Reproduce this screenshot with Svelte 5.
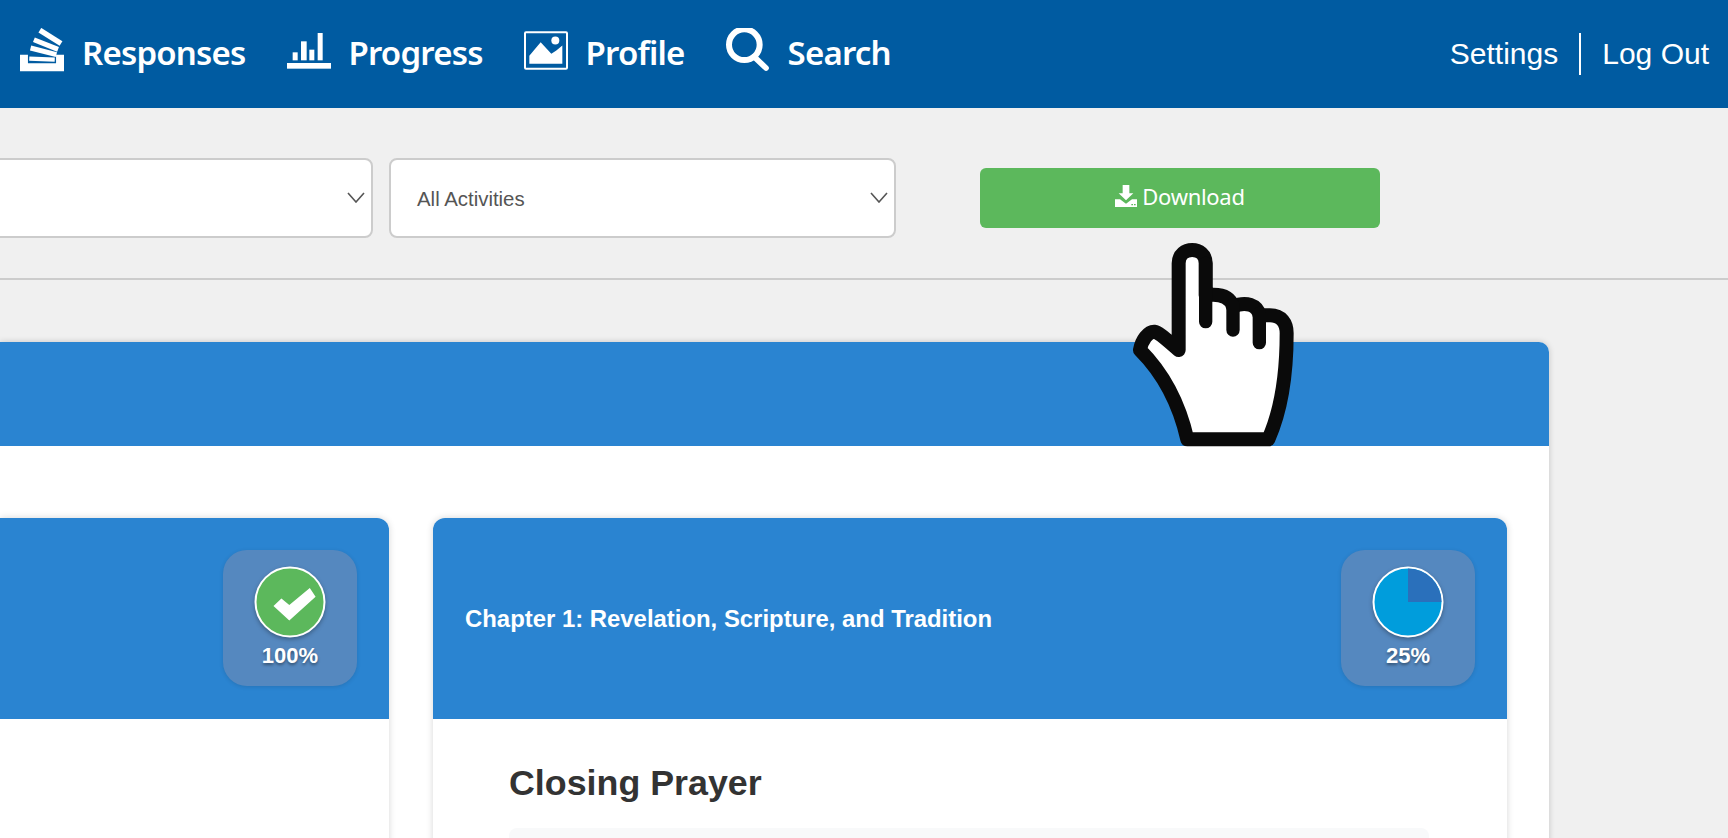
<script>
  const navItems = [
    { label: 'Responses', key: 'responses' },
    { label: 'Progress', key: 'progress' },
    { label: 'Profile', key: 'profile' },
    { label: 'Search', key: 'search' }
  ];
</script>

<div class="page">
  <header class="topbar">
    <nav class="main-nav">
      {#each navItems as item}
        <a class="nav-item {item.key}" href="#{item.key}">
          {#if item.key === 'responses'}
            <svg class="ico" viewBox="0 0 133 132" width="44" height="44" fill="none" stroke="#fff">
              <path d="M12 80V118H121V80" stroke-width="24" />
              <path d="M28 92L105 95" stroke-width="13" />
              <path d="M32 60L110 80" stroke-width="15" />
              <path d="M42 35L115 64" stroke-width="15" />
              <path d="M60 6L124 46" stroke-width="16" />
            </svg>
          {:else if item.key === 'progress'}
            <svg class="ico shifted" viewBox="0 0 132 108" width="44" height="36" fill="#fff">
              <rect x="0" y="90" width="132" height="17" />
              <rect x="17" y="58" width="15" height="24" />
              <rect x="42" y="25" width="17" height="57" />
              <rect x="67" y="50" width="15" height="32" />
              <rect x="92" y="0" width="15" height="82" />
            </svg>
          {:else if item.key === 'profile'}
            <svg class="ico" viewBox="0 0 132 116" width="44" height="39">
              <rect x="3" y="3" width="126" height="110" rx="3" fill="none" stroke="#fff" stroke-width="6" />
              <circle cx="94" cy="28" r="12" fill="#fff" />
              <path d="M16 98V74L50 33L82 68L97 58L115 43V98Z" fill="#fff" />
            </svg>
          {:else}
            <svg class="ico" viewBox="0 0 132 132" width="44" height="44" fill="none" stroke="#fff">
              <circle cx="55" cy="50" r="46" stroke-width="18" />
              <path d="M84 86L120 120" stroke-width="17" stroke-linecap="round" />
            </svg>
          {/if}
          <span>{item.label}</span>
        </a>
      {/each}
    </nav>
    <div class="account">
      <a href="#settings">Settings</a>
      <i class="sep"></i>
      <a href="#logout">Log Out</a>
    </div>
  </header>

  <section class="filters">
    <div class="select first">
      <svg class="chev" viewBox="0 0 18 11" width="18" height="11"><path d="M1 1L9 10L17 1" /></svg>
    </div>
    <div class="select second">
      <span>All Activities</span>
      <svg class="chev" viewBox="0 0 18 11" width="18" height="11"><path d="M1 1L9 10L17 1" /></svg>
    </div>
    <button class="download">
      <svg viewBox="0 0 66 66" width="22" height="22" fill="#fff">
        <path d="M23 0H43V25H55L33 46L11 25H23Z" />
        <path fill-rule="evenodd" d="M0 43H15L33 56L51 43H66V66H0ZM49 57h5v4h-5ZM57 57h5v4h-5Z" />
      </svg>
      <span>Download</span>
    </button>
  </section>

  <section class="panel">
    <div class="panel-head"></div>
    <div class="panel-body">
      <article class="card">
        <div class="card-head">
          <div class="badge">
            <svg viewBox="0 0 72 72" width="72" height="72">
              <circle cx="36" cy="36" r="34.5" fill="#5cb85c" stroke="#fff" stroke-width="2" />
              <path d="M27.400 32.500L19.500 40L35.300 54.500L61.600 30.800L55.800 21.900L35.300 39Z" fill="#fff" />
            </svg>
            <b>100%</b>
          </div>
        </div>
      </article>
      <article class="card">
        <div class="card-head">
          <h3>Chapter 1: Revelation, Scripture, and Tradition</h3>
          <div class="badge">
            <svg viewBox="0 0 72 72" width="72" height="72">
              <circle cx="36" cy="36" r="34.5" fill="#009ddc" stroke="#fff" stroke-width="2" />
              <path d="M36 36V2.500A33.500 33.500 0 0 1 69.500 36Z" fill="#2a70bb" />
            </svg>
            <b>25%</b>
          </div>
        </div>
        <div class="card-body">
          <h2>Closing Prayer</h2>
          <div class="well"></div>
        </div>
      </article>
    </div>
  </section>

  <svg class="hand" viewBox="0 0 1320 900" width="440" height="300" aria-hidden="true">
    <path
      d="M656 600V340C656 287 737 287 737 340V436C782 430 810 440 819 470C858 452 892 465 899 496H930C965 496 980 520 980 550C980 680 960 790 925 868H682C662 780 620 680 540 600C545 570 565 545 582 545C600 548 625 575 656 600Z"
      fill="#fff" stroke="#0a0a0a" stroke-width="42" stroke-linejoin="round" />
    <path d="M737 340V515M819 465V540M898 490V578" fill="none" stroke="#0a0a0a" stroke-width="40" stroke-linecap="round" />
  </svg>
</div>

<style>
  :global(body) {
    margin: 0;
    background: #f0f0f0;
    overflow: hidden;
  }
  .page {
    position: relative;
    height: 838px;
    overflow: hidden;
    font-family: "Liberation Sans", Arial, sans-serif;
  }
  .topbar {
    display: flex;
    justify-content: space-between;
    align-items: center;
    height: 108px;
    background: #005ba1;
    color: #fff;
    padding: 0 19px 0 20px;
    box-sizing: border-box;
  }
  .main-nav {
    display: flex;
    align-items: center;
    padding-bottom: 8px;
  }
  .nav-item {
    display: flex;
    align-items: center;
    gap: 18px;
    color: #fff;
    text-decoration: none;
    font: 600 33px "Noto Sans", sans-serif;
    letter-spacing: -0.8px;
    margin-right: 41px;
  }
  .nav-item span {
    position: relative;
    top: 2px;
  }
  .ico {
    display: block;
    flex: none;
  }
  .ico.shifted {
    position: relative;
    top: 1px;
  }
  .account {
    display: flex;
    align-items: center;
    font-size: 30px;
  }
  .account a {
    color: #fff;
    text-decoration: none;
  }
  .sep {
    width: 2px;
    height: 42px;
    margin: 0 21px;
    background: #fff;
  }
  .filters {
    display: flex;
    align-items: flex-start;
    height: 172px;
    padding-top: 50px;
    box-sizing: border-box;
    border-bottom: 2px solid #ccc;
  }
  .select {
    display: flex;
    align-items: center;
    justify-content: space-between;
    height: 80px;
    box-sizing: border-box;
    background: #fff;
    border: 2px solid #ccc;
    border-radius: 8px;
    color: #555;
    font-size: 20.400px;
    padding: 2px 6px 0 26px;
  }
  .select.first {
    width: 381px;
    margin-left: -8px;
    justify-content: flex-end;
  }
  .select.second {
    width: 507px;
    margin-left: 16px;
  }
  .chev {
    position: relative;
    top: -2px;
  }
  .chev path {
    fill: none;
    stroke: #555;
    stroke-width: 1.6;
  }
  .download {
    display: flex;
    align-items: center;
    justify-content: center;
    gap: 5px;
    width: 400px;
    height: 60px;
    margin: 10px 0 0 84px;
    padding: 0 0 4px;
    border: 0;
    border-radius: 6px;
    background: #5cb85c;
    color: #fff;
    font: 400 22px "Noto Sans", sans-serif;
    letter-spacing: -0.3px;
  }
  .panel {
    width: 1549px;
    margin-top: 62px;
    background: #fff;
    border-radius: 0 10px 0 0;
    box-shadow: 0 0 6px rgba(0, 0, 0, 0.18);
  }
  .panel-head {
    height: 104px;
    background: #2a84d1;
    border-radius: 0 10px 0 0;
  }
  .panel-body {
    display: grid;
    grid-template-columns: 389px 1074px;
    column-gap: 44px;
    padding-top: 72px;
    height: 400px;
  }
  .card {
    background: #fff;
    box-shadow: 0 0 7px rgba(0, 0, 0, 0.16);
    border-radius: 0 12px 0 0;
  }
  .card + .card {
    border-radius: 12px 12px 0 0;
  }
  .card-head {
    display: flex;
    align-items: flex-start;
    justify-content: flex-end;
    height: 201px;
    box-sizing: border-box;
    padding: 32px 32px 0 32px;
    background: #2a84d1;
    border-radius: inherit;
  }
  .card-head h3 {
    flex: 1;
    align-self: center;
    margin: -32px 0 0;
    color: #fff;
    font-size: 23.900px;
    font-weight: 700;
  }
  .badge {
    display: flex;
    flex-direction: column;
    align-items: center;
    width: 134px;
    height: 136px;
    box-sizing: border-box;
    padding-top: 16px;
    border-radius: 24px;
    background: #5588bf;
    box-shadow: 0 1px 4px rgba(0, 0, 0, 0.12);
    color: #fff;
  }
  .badge svg {
    display: block;
    filter: drop-shadow(0 2px 2px rgba(0, 0, 0, 0.3));
  }
  .badge b {
    margin-top: 4px;
    font-size: 22px;
    line-height: 28px;
    text-shadow: 0 2px 3px rgba(0, 0, 0, 0.4);
  }
  .card-body {
    padding: 43px 78px 0 76px;
  }
  .card-body h2 {
    margin: 0 0 24px;
    color: #333;
    font-size: 35.800px;
    line-height: 42px;
    font-weight: 700;
  }
  .well {
    height: 80px;
    background: #f8f9fa;
    border-radius: 8px;
  }
  .hand {
    position: absolute;
    left: 960px;
    top: 150px;
  }
</style>
